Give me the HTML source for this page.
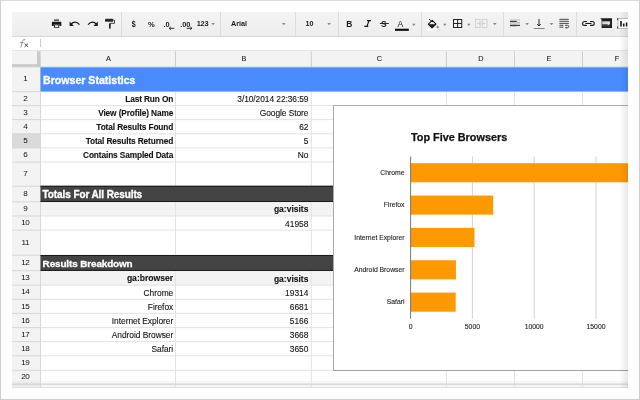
<!DOCTYPE html>
<html><head><meta charset="utf-8"><style>
html,body{margin:0;padding:0;width:640px;height:400px;overflow:hidden;background:#fff}
#c{position:absolute;left:0;top:0;width:628px;height:388px;overflow:hidden;will-change:transform}
#c div,.fr{position:absolute}
.t{position:absolute;font-family:"Liberation Sans", sans-serif;line-height:1;white-space:nowrap;-webkit-text-stroke:0.1px currentColor}
svg{position:absolute}
</style></head><body>
<div id="c">
<div style="left:12px;top:12px;width:616px;height:25px;background:linear-gradient(#f4f4f4,#ededed)"></div><div style="left:12px;top:36px;width:616px;height:1px;background:#d9d9d9"></div><div style="left:121px;top:12px;width:1px;height:24px;background:#dcdcdc"></div><div style="left:220px;top:12px;width:1px;height:24px;background:#dcdcdc"></div><div style="left:295px;top:12px;width:1px;height:24px;background:#dcdcdc"></div><div style="left:338px;top:12px;width:1px;height:24px;background:#dcdcdc"></div><div style="left:421px;top:12px;width:1px;height:24px;background:#dcdcdc"></div><div style="left:503px;top:12px;width:1px;height:24px;background:#dcdcdc"></div><div style="left:576px;top:12px;width:1px;height:24px;background:#dcdcdc"></div><div style="left:12px;top:37px;width:616px;height:14px;background:#fff"></div><svg width="640" height="400" style="left:0;top:0"><rect x="12.00" y="50.40" width="616.00" height="0.90" fill="#d6d6d6"/><rect x="12.00" y="51.30" width="616.00" height="15.60" fill="#f3f3f3"/><rect x="12.00" y="66.90" width="28.50" height="330.00" fill="#f3f3f3"/><rect x="12.00" y="133.80" width="28.50" height="14.10" fill="#dadada"/><rect x="40.50" y="66.90" width="587.50" height="330.00" fill="#fff"/><rect x="40.50" y="201.80" width="587.50" height="14.20" fill="#f3f3f3"/><rect x="40.50" y="270.70" width="587.50" height="14.50" fill="#f3f3f3"/><rect x="40.50" y="381.00" width="587.50" height="7.00" fill="#f7f7f7"/><rect x="12.00" y="381.00" width="28.50" height="7.00" fill="#ececec"/><rect x="175.00" y="51.30" width="1.00" height="15.60" fill="#cdcdcd"/><rect x="310.80" y="51.30" width="1.00" height="15.60" fill="#cdcdcd"/><rect x="445.90" y="51.30" width="1.00" height="15.60" fill="#cdcdcd"/><rect x="514.00" y="51.30" width="1.00" height="15.60" fill="#cdcdcd"/><rect x="582.00" y="51.30" width="1.00" height="15.60" fill="#cdcdcd"/><rect x="12.00" y="66.40" width="616.00" height="1.00" fill="#d4d4d4"/><rect x="40.50" y="91.10" width="587.50" height="1.00" fill="#e3e3e3"/><rect x="12.00" y="91.10" width="28.50" height="1.00" fill="#d6d6d6"/><rect x="40.50" y="105.10" width="587.50" height="1.00" fill="#e3e3e3"/><rect x="12.00" y="105.10" width="28.50" height="1.00" fill="#d6d6d6"/><rect x="40.50" y="119.10" width="587.50" height="1.00" fill="#e3e3e3"/><rect x="12.00" y="119.10" width="28.50" height="1.00" fill="#d6d6d6"/><rect x="40.50" y="133.30" width="587.50" height="1.00" fill="#e3e3e3"/><rect x="12.00" y="133.30" width="28.50" height="1.00" fill="#d6d6d6"/><rect x="40.50" y="147.40" width="587.50" height="1.00" fill="#e3e3e3"/><rect x="12.00" y="147.40" width="28.50" height="1.00" fill="#d6d6d6"/><rect x="40.50" y="161.60" width="587.50" height="1.00" fill="#e3e3e3"/><rect x="12.00" y="161.60" width="28.50" height="1.00" fill="#d6d6d6"/><rect x="40.50" y="185.70" width="587.50" height="1.00" fill="#e3e3e3"/><rect x="12.00" y="185.70" width="28.50" height="1.00" fill="#d6d6d6"/><rect x="40.50" y="201.30" width="587.50" height="1.00" fill="#e3e3e3"/><rect x="12.00" y="201.30" width="28.50" height="1.00" fill="#d6d6d6"/><rect x="40.50" y="215.50" width="587.50" height="1.00" fill="#e3e3e3"/><rect x="12.00" y="215.50" width="28.50" height="1.00" fill="#d6d6d6"/><rect x="40.50" y="229.60" width="587.50" height="1.00" fill="#e3e3e3"/><rect x="12.00" y="229.60" width="28.50" height="1.00" fill="#d6d6d6"/><rect x="40.50" y="254.70" width="587.50" height="1.00" fill="#e3e3e3"/><rect x="12.00" y="254.70" width="28.50" height="1.00" fill="#d6d6d6"/><rect x="40.50" y="270.20" width="587.50" height="1.00" fill="#e3e3e3"/><rect x="12.00" y="270.20" width="28.50" height="1.00" fill="#d6d6d6"/><rect x="40.50" y="284.70" width="587.50" height="1.00" fill="#e3e3e3"/><rect x="12.00" y="284.70" width="28.50" height="1.00" fill="#d6d6d6"/><rect x="40.50" y="298.80" width="587.50" height="1.00" fill="#e3e3e3"/><rect x="12.00" y="298.80" width="28.50" height="1.00" fill="#d6d6d6"/><rect x="40.50" y="312.90" width="587.50" height="1.00" fill="#e3e3e3"/><rect x="12.00" y="312.90" width="28.50" height="1.00" fill="#d6d6d6"/><rect x="40.50" y="327.10" width="587.50" height="1.00" fill="#e3e3e3"/><rect x="12.00" y="327.10" width="28.50" height="1.00" fill="#d6d6d6"/><rect x="40.50" y="341.10" width="587.50" height="1.00" fill="#e3e3e3"/><rect x="12.00" y="341.10" width="28.50" height="1.00" fill="#d6d6d6"/><rect x="40.50" y="355.30" width="587.50" height="1.00" fill="#e3e3e3"/><rect x="12.00" y="355.30" width="28.50" height="1.00" fill="#d6d6d6"/><rect x="40.50" y="369.80" width="587.50" height="1.00" fill="#e3e3e3"/><rect x="12.00" y="369.80" width="28.50" height="1.00" fill="#d6d6d6"/><rect x="40.50" y="383.70" width="587.50" height="1.00" fill="#e3e3e3"/><rect x="12.00" y="383.70" width="28.50" height="1.00" fill="#d6d6d6"/><rect x="175.00" y="66.90" width="1.00" height="330.00" fill="#e3e3e3"/><rect x="310.80" y="66.90" width="1.00" height="330.00" fill="#e3e3e3"/><rect x="445.90" y="66.90" width="1.00" height="330.00" fill="#e3e3e3"/><rect x="514.00" y="66.90" width="1.00" height="330.00" fill="#e3e3e3"/><rect x="582.00" y="66.90" width="1.00" height="330.00" fill="#e3e3e3"/><rect x="40.00" y="51.30" width="1.00" height="346.00" fill="#d8d8d8"/><rect x="12.00" y="383.70" width="616.00" height="1.00" fill="#d2d2d2"/><rect x="12.00" y="386.90" width="616.00" height="1.00" fill="#e0e0e0"/><rect x="40.50" y="67.30" width="587.50" height="24.20" fill="#4a8cff"/><rect x="40.50" y="185.80" width="587.50" height="16.00" fill="#444444"/><rect x="40.50" y="185.80" width="587.50" height="1.00" fill="#1a1a1a"/><rect x="40.50" y="201.00" width="587.50" height="1.00" fill="#1a1a1a"/><rect x="40.50" y="255.00" width="587.50" height="15.70" fill="#444444"/><rect x="40.50" y="255.00" width="587.50" height="1.00" fill="#1a1a1a"/><rect x="40.50" y="269.90" width="587.50" height="1.00" fill="#1a1a1a"/><rect x="37.00" y="51.30" width="3.00" height="15.60" fill="#c9c9c9"/><rect x="12.00" y="64.20" width="28.00" height="2.60" fill="#c9c9c9"/></svg><span class="t" style="left:-91.50px;width:400px;text-align:center;top:55.12px;font-size:7.3px;font-weight:normal;color:#222;">A</span><span class="t" style="left:43.90px;width:400px;text-align:center;top:55.12px;font-size:7.3px;font-weight:normal;color:#222;">B</span><span class="t" style="left:179.35px;width:400px;text-align:center;top:55.12px;font-size:7.3px;font-weight:normal;color:#222;">C</span><span class="t" style="left:280.95px;width:400px;text-align:center;top:55.12px;font-size:7.3px;font-weight:normal;color:#222;">D</span><span class="t" style="left:349.00px;width:400px;text-align:center;top:55.12px;font-size:7.3px;font-weight:normal;color:#222;">E</span><span class="t" style="left:417.05px;width:400px;text-align:center;top:55.12px;font-size:7.3px;font-weight:normal;color:#222;">F</span><span class="t" style="left:-174.80px;width:400px;text-align:center;top:75.49px;font-size:8.1px;font-weight:normal;color:#111;letter-spacing:-0.45px;-webkit-text-stroke:0">1</span><span class="t" style="left:-174.80px;width:400px;text-align:center;top:94.84px;font-size:8.1px;font-weight:normal;color:#111;letter-spacing:-0.45px;-webkit-text-stroke:0">2</span><span class="t" style="left:-174.80px;width:400px;text-align:center;top:108.84px;font-size:8.1px;font-weight:normal;color:#111;letter-spacing:-0.45px;-webkit-text-stroke:0">3</span><span class="t" style="left:-174.80px;width:400px;text-align:center;top:122.94px;font-size:8.1px;font-weight:normal;color:#111;letter-spacing:-0.45px;-webkit-text-stroke:0">4</span><span class="t" style="left:-174.80px;width:400px;text-align:center;top:137.09px;font-size:8.1px;font-weight:normal;color:#111;letter-spacing:-0.45px;-webkit-text-stroke:0">5</span><span class="t" style="left:-174.80px;width:400px;text-align:center;top:151.24px;font-size:8.1px;font-weight:normal;color:#111;letter-spacing:-0.45px;-webkit-text-stroke:0">6</span><span class="t" style="left:-174.80px;width:400px;text-align:center;top:170.39px;font-size:8.1px;font-weight:normal;color:#111;letter-spacing:-0.45px;-webkit-text-stroke:0">7</span><span class="t" style="left:-174.80px;width:400px;text-align:center;top:190.24px;font-size:8.1px;font-weight:normal;color:#111;letter-spacing:-0.45px;-webkit-text-stroke:0">8</span><span class="t" style="left:-174.80px;width:400px;text-align:center;top:205.14px;font-size:8.1px;font-weight:normal;color:#111;letter-spacing:-0.45px;-webkit-text-stroke:0">9</span><span class="t" style="left:-174.80px;width:400px;text-align:center;top:219.29px;font-size:8.1px;font-weight:normal;color:#111;letter-spacing:-0.45px;-webkit-text-stroke:0">10</span><span class="t" style="left:-174.80px;width:400px;text-align:center;top:238.89px;font-size:8.1px;font-weight:normal;color:#111;letter-spacing:-0.45px;-webkit-text-stroke:0">11</span><span class="t" style="left:-174.80px;width:400px;text-align:center;top:259.19px;font-size:8.1px;font-weight:normal;color:#111;letter-spacing:-0.45px;-webkit-text-stroke:0">12</span><span class="t" style="left:-174.80px;width:400px;text-align:center;top:274.19px;font-size:8.1px;font-weight:normal;color:#111;letter-spacing:-0.45px;-webkit-text-stroke:0">13</span><span class="t" style="left:-174.80px;width:400px;text-align:center;top:288.49px;font-size:8.1px;font-weight:normal;color:#111;letter-spacing:-0.45px;-webkit-text-stroke:0">14</span><span class="t" style="left:-174.80px;width:400px;text-align:center;top:302.59px;font-size:8.1px;font-weight:normal;color:#111;letter-spacing:-0.45px;-webkit-text-stroke:0">15</span><span class="t" style="left:-174.80px;width:400px;text-align:center;top:316.74px;font-size:8.1px;font-weight:normal;color:#111;letter-spacing:-0.45px;-webkit-text-stroke:0">16</span><span class="t" style="left:-174.80px;width:400px;text-align:center;top:330.84px;font-size:8.1px;font-weight:normal;color:#111;letter-spacing:-0.45px;-webkit-text-stroke:0">17</span><span class="t" style="left:-174.80px;width:400px;text-align:center;top:344.94px;font-size:8.1px;font-weight:normal;color:#111;letter-spacing:-0.45px;-webkit-text-stroke:0">18</span><span class="t" style="left:-174.80px;width:400px;text-align:center;top:359.29px;font-size:8.1px;font-weight:normal;color:#111;letter-spacing:-0.45px;-webkit-text-stroke:0">19</span><span class="t" style="left:-174.80px;width:400px;text-align:center;top:373.49px;font-size:8.1px;font-weight:normal;color:#111;letter-spacing:-0.45px;-webkit-text-stroke:0">20</span><span class="t" style="left:43px;top:74.73px;font-size:10.6px;font-weight:bold;color:#fff;-webkit-text-stroke:0.3px #fff">Browser Statistics</span><span class="t" style="right:454.80px;top:94.97px;font-size:8.3px;font-weight:bold;color:#111;letter-spacing:-0.12px">Last Run On</span><span class="t" style="right:319.60px;top:94.89px;font-size:8.4px;font-weight:normal;color:#111;letter-spacing:-0.06px">3/10/2014 22:36:59</span><span class="t" style="right:454.80px;top:108.97px;font-size:8.3px;font-weight:bold;color:#111;letter-spacing:-0.12px">View (Profile) Name</span><span class="t" style="right:319.60px;top:108.89px;font-size:8.4px;font-weight:normal;color:#111;letter-spacing:-0.06px">Google Store</span><span class="t" style="right:454.80px;top:123.17px;font-size:8.3px;font-weight:bold;color:#111;letter-spacing:-0.12px">Total Results Found</span><span class="t" style="right:319.60px;top:123.09px;font-size:8.4px;font-weight:normal;color:#111;letter-spacing:-0.06px">62</span><span class="t" style="right:454.80px;top:137.27px;font-size:8.3px;font-weight:bold;color:#111;letter-spacing:-0.12px">Total Results Returned</span><span class="t" style="right:319.60px;top:137.19px;font-size:8.4px;font-weight:normal;color:#111;letter-spacing:-0.06px">5</span><span class="t" style="right:454.80px;top:151.47px;font-size:8.3px;font-weight:bold;color:#111;letter-spacing:-0.12px">Contains Sampled Data</span><span class="t" style="right:319.60px;top:151.39px;font-size:8.4px;font-weight:normal;color:#111;letter-spacing:-0.06px">No</span><span class="t" style="left:42.6px;top:189.94px;font-size:10px;font-weight:bold;color:#fff;letter-spacing:-0.1px;-webkit-text-stroke:0.3px #fff">Totals For All Results</span><span class="t" style="right:319.60px;top:204.60px;font-size:8.5px;font-weight:bold;color:#111;">ga:visits</span><span class="t" style="right:319.60px;top:220.39px;font-size:8.4px;font-weight:normal;color:#111;">41958</span><span class="t" style="left:42.6px;top:258.62px;font-size:9.9px;font-weight:bold;color:#fff;letter-spacing:-0.1px;-webkit-text-stroke:0.3px #fff">Results Breakdown</span><span class="t" style="right:454.80px;top:274.42px;font-size:8.6px;font-weight:bold;color:#111;">ga:browser</span><span class="t" style="right:319.60px;top:274.50px;font-size:8.5px;font-weight:bold;color:#111;">ga:visits</span><span class="t" style="right:454.80px;top:288.59px;font-size:8.4px;font-weight:normal;color:#111;letter-spacing:-0.03px">Chrome</span><span class="t" style="right:319.60px;top:288.59px;font-size:8.4px;font-weight:normal;color:#111;">19314</span><span class="t" style="right:454.80px;top:302.69px;font-size:8.4px;font-weight:normal;color:#111;letter-spacing:-0.03px">Firefox</span><span class="t" style="right:319.60px;top:302.69px;font-size:8.4px;font-weight:normal;color:#111;">6681</span><span class="t" style="right:454.80px;top:316.89px;font-size:8.4px;font-weight:normal;color:#111;letter-spacing:-0.03px">Internet Explorer</span><span class="t" style="right:319.60px;top:316.89px;font-size:8.4px;font-weight:normal;color:#111;">5166</span><span class="t" style="right:454.80px;top:330.89px;font-size:8.4px;font-weight:normal;color:#111;letter-spacing:-0.03px">Android Browser</span><span class="t" style="right:319.60px;top:330.89px;font-size:8.4px;font-weight:normal;color:#111;">3668</span><span class="t" style="right:454.80px;top:345.09px;font-size:8.4px;font-weight:normal;color:#111;letter-spacing:-0.03px">Safari</span><span class="t" style="right:319.60px;top:345.09px;font-size:8.4px;font-weight:normal;color:#111;">3650</span><div style="left:333px;top:105px;width:300px;height:266px;background:#fff;border-left:1px solid #a9a9a9;border-top:1px solid #b0aea8;border-bottom:1px solid #a0a0a0;box-sizing:border-box"></div><span class="t" style="left:411px;top:132.02px;font-size:10.85px;font-weight:bold;color:#111;-webkit-text-stroke:0.25px #111">Top Five Browsers</span><span class="t" style="right:223.50px;top:170.04px;font-size:6.8px;font-weight:normal;color:#222;">Chrome</span><span class="t" style="right:223.50px;top:202.39px;font-size:6.8px;font-weight:normal;color:#222;">Firefox</span><span class="t" style="right:223.50px;top:234.74px;font-size:6.8px;font-weight:normal;color:#222;">Internet Explorer</span><span class="t" style="right:223.50px;top:267.09px;font-size:6.8px;font-weight:normal;color:#222;">Android Browser</span><span class="t" style="right:223.50px;top:299.44px;font-size:6.8px;font-weight:normal;color:#222;">Safari</span><svg width="640" height="400" style="left:0;top:0"><rect x="471.90" y="156.6" width="1" height="162.1" fill="#d2d2d2"/><rect x="533.70" y="156.6" width="1" height="162.1" fill="#d2d2d2"/><rect x="595.50" y="156.6" width="1" height="162.1" fill="#d2d2d2"/><rect x="410.60" y="163.20" width="238.72" height="19.1" fill="#ff9900"/><rect x="410.60" y="195.55" width="82.58" height="19.1" fill="#ff9900"/><rect x="410.60" y="227.90" width="63.85" height="19.1" fill="#ff9900"/><rect x="410.60" y="260.25" width="45.34" height="19.1" fill="#ff9900"/><rect x="410.60" y="292.60" width="45.11" height="19.1" fill="#ff9900"/><rect x="410.1" y="156.6" width="1" height="162.1" fill="#777"/></svg><span class="t" style="left:210.60px;width:400px;text-align:center;top:323.54px;font-size:6.8px;font-weight:normal;color:#222;">0</span><span class="t" style="left:272.40px;width:400px;text-align:center;top:323.54px;font-size:6.8px;font-weight:normal;color:#222;">5000</span><span class="t" style="left:334.20px;width:400px;text-align:center;top:323.54px;font-size:6.8px;font-weight:normal;color:#222;">10000</span><span class="t" style="left:396.00px;width:400px;text-align:center;top:323.54px;font-size:6.8px;font-weight:normal;color:#222;">15000</span><div style="left:619px;top:12px;width:9px;height:376px;background:linear-gradient(to right, rgba(0,0,0,0), rgba(0,0,0,0.09))"></div><svg width="640" height="400" viewBox="0 0 640 400" style="left:0;top:0">
<g fill="#1a1a1a">
 <rect x="54" y="19.5" width="5" height="1.2"/>
 <path d="M52.5 21.8h8.2a.6.6 0 0 1 .6.6v3.6h-1.8v-1.4h-5.8v1.4h-1.8v-3.6a.6.6 0 0 1 .6-.6z"/>
 <path d="M54 24.5h5.2v3.3h-5.2zM54.9 25.3v1.7h3.4v-1.7z" fill-rule="evenodd"/>
</g>
<g fill="none" stroke="#1a1a1a" stroke-width="1.3">
 <path d="M71 24.3 Q75 19.8 79.5 24.6"/>
 <path d="M88 24.6 Q92.5 19.8 96.5 24.3"/>
</g>
<g fill="#1a1a1a">
 <path d="M69.6 21.6v4.3h4.3z"/>
 <path d="M97.8 21.6v4.3h-4.3z"/>
 <rect x="105" y="18.8" width="8.3" height="2.9" rx="1" fill="#2a2a2a"/>
 <path d="M113.3 20.2h1.2v3.1h-4.6v2" fill="none" stroke="#333" stroke-width="0.9"/>
 <rect x="109.1" y="23.6" width="1.5" height="5" fill="#111"/>
</g>
<g font-family="Liberation Sans" font-weight="bold" fill="#1a1a1a">
 <text transform="translate(131.8 26.8) scale(0.82 1)" font-size="8.6">$</text>
 <text x="147.9" y="26.5" font-size="7.6" letter-spacing="0">%</text>
 <text x="163.5" y="26.5" font-size="7.4">.0</text>
 <text x="180.2" y="26.5" font-size="7.4">.00</text>
 <text x="196.8" y="26.3" font-size="7.4" letter-spacing="-0.3">123</text>
 <text x="231" y="26.4" font-size="7.2">Arial</text>
 <text x="305.4" y="26.4" font-size="7.2">10</text>
</g>
<g fill="none" stroke="#1a1a1a" stroke-width="0.9">
 <path d="M174.3 28.3h-5M170.8 26.8l-1.6 1.5 1.6 1.5"/>
 <path d="M186.7 28.3h5.2M190.3 26.8l1.6 1.5-1.6 1.5"/>
</g>
<g fill="#888">
 <path d="M211.3 23.1h3.6l-1.8 2.1z"/>
 <path d="M282.0 23.1h3.6l-1.8 2.1z"/>
 <path d="M327.3 23.1h3.6l-1.8 2.1z"/>
 <path d="M412.0 23.8h3.6l-1.8 2.1z"/>
 <path d="M443.0 23.8h3.6l-1.8 2.1z"/>
 <path d="M467.0 23.8h3.6l-1.8 2.1z"/>
 <path d="M493.0 23.1h3.6l-1.8 2.1z"/>
 <path d="M525.3 23.1h3.6l-1.8 2.1z"/>
 <path d="M549.7 23.1h3.6l-1.8 2.1z"/>
</g>
<g font-family="Liberation Sans" fill="#1a1a1a">
 <text x="346.3" y="26.6" font-size="8.4" font-weight="bold">B</text>
 
 <text x="381" y="26.6" font-size="8.4" font-weight="bold">S</text>
 <text x="397.6" y="26.6" font-size="8.6">A</text>
</g>
<path d="M367 20.6h4M369.1 20.6l-2.2 5.7M364.3 26.3h4" fill="none" stroke="#1a1a1a" stroke-width="1.15"/>
<rect x="379.8" y="23.1" width="9" height="0.9" fill="#1a1a1a"/>
<rect x="395" y="28.7" width="13.8" height="2.2" fill="#111"/>
<g>
 <path d="M432.3 20.4L436 24.1L432 27.8L428.3 24.2Z" fill="none" stroke="#1a1a1a" stroke-width="1.1" stroke-linejoin="round"/>
 <path d="M428.3 24.2h7.7L432 27.8z" fill="#1a1a1a"/>
 <path d="M429 19.1L432.3 21.8" stroke="#1a1a1a" stroke-width="0.9"/>
 <path d="M437.6 25.2q1.2 1.4 1.2 2.1a1.2 1.2 0 0 1 -2.4 0q0 -.7 1.2 -2.1z" fill="#8a8a8a"/>
 <rect x="426" y="28.6" width="12.5" height="2" fill="#fff"/>
</g>
<g fill="none" stroke="#222" stroke-width="1">
 <rect x="453.5" y="19.5" width="8.2" height="8"/>
 <path d="M457.6 19.5v8M453.5 23.5h8.2"/>
</g>
<g fill="none" stroke="#cfcfcf" stroke-width="0.9">
 <rect x="475.3" y="19.4" width="4.8" height="8.2"/>
 <rect x="482.2" y="19.4" width="4.8" height="8.2"/>
 <path d="M477 23.5h3.5M479.2 22.3l1.3 1.2-1.3 1.2M485.5 23.5h-3.5M483.3 22.3l-1.3 1.2 1.3 1.2"/>
</g>
<g>
 <rect x="510" y="19.4" width="10" height="1.2" fill="#c4c4c4"/>
 <rect x="510" y="20.9" width="6.7" height="1.1" fill="#3a3a3a"/>
 <rect x="510" y="22.1" width="6.7" height="2.5" fill="#cdcdcd"/>
 <rect x="516.7" y="22.3" width="3.3" height="1" fill="#9a9a9a"/>
 <rect x="510" y="24.8" width="10" height="1.1" fill="#2a2a2a"/>
 <rect x="510" y="26" width="6.7" height="1" fill="#c8c8c8"/>
</g>
<g>
 <path d="M539 19v6.6M537.2 24.1l1.8 1.9 1.8-1.9" fill="none" stroke="#1a1a1a" stroke-width="0.95"/>
 <rect x="533.8" y="28" width="10.8" height="0.9" fill="#777"/>
</g>
<g fill="none" stroke="#333" stroke-width="0.9">
 <path d="M559.4 19.3h9.4M559.4 21.3h9.4M559.4 23.4h9.4M559.4 25.3h4M559.4 27.2h4"/>
 <path d="M565 25.3h2.5a1.2 1.2 0 0 1 0 2.4h-1.5"/>
</g>
<path d="M566.4 26.6v2.2l-1.3-1.1z" fill="#333"/>
<g fill="none" stroke="#1a1a1a" stroke-width="1.1">
 <path d="M586.8 21.5h-2.3a1.95 1.95 0 0 0 0 3.9h2.3"/>
 <path d="M590 21.5h2.3a1.95 1.95 0 0 1 0 3.9h-2.3"/>
 <path d="M585.3 23.45h6.2"/>
</g>
<g>
 <path d="M600.2 18.3h11.8v9.8h-10.4v-8.4z" fill="#1c1c1c"/>
 <rect x="602.2" y="21.3" width="7.9" height="3.2" fill="#d8d8d8"/>
 <rect x="602.2" y="24.5" width="7.9" height="2" fill="#444"/>
 <rect x="607.6" y="23.4" width="1.6" height="1.3" fill="#fff"/>
</g>
<g>
 <rect x="618" y="18.5" width="12" height="9.8" fill="#fff" stroke="#aaa" stroke-width="0.8"/>
 <path d="M617.6 18.2v2M617.6 26.5v2" stroke="#333" stroke-width="1"/>
 <rect x="620.2" y="21" width="1.6" height="5.5" fill="#111"/>
 <rect x="623" y="23.5" width="1.5" height="3" fill="#111"/>
 <rect x="625.8" y="22.5" width="1.5" height="4" fill="#111"/>
</g>
<path d="M25.2 39.6q-2.1-.6-2.7 1.6l-1.7 6.3M19.9 42.6h3.8" fill="none" stroke="#8c8c8c" stroke-width="0.9"/>
<rect x="40" y="39" width="0.9" height="8" fill="#c4c4c4"/>
<path d="M24.6 43.5l3.4 3.4M28 43.5l-3.4 3.4" stroke="#333" stroke-width="0.9"/>
</svg>
</div>
<div class="fr" style="left:0;top:0;width:640px;height:1px;background:#dcdcdc"></div>
<div class="fr" style="left:0;top:0;width:1px;height:400px;background:#cfcfcf"></div>
<div class="fr" style="left:639px;top:0;width:1px;height:400px;background:#cfcfcf"></div>
<div class="fr" style="left:0;top:399px;width:640px;height:1px;background:#cfcfcf"></div>
</body></html>
